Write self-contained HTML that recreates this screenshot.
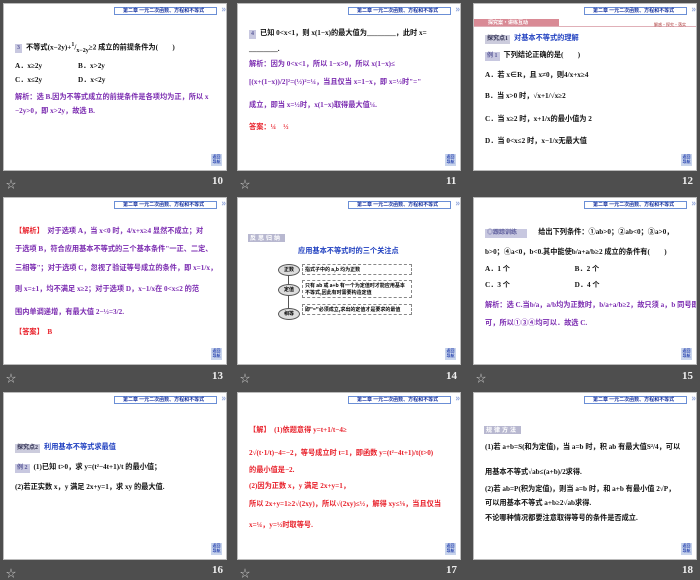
<!DOCTYPE html>
<html><head><meta charset="utf-8"><style>
*{margin:0;padding:0;box-sizing:border-box}
body{width:700px;height:577px;background:#4e4e4e;position:relative;overflow:hidden;font-family:"Liberation Serif","Noto Sans CJK SC",serif}
.s{position:absolute;width:224px;height:168px;background:#fff;border:1px solid #bbb;overflow:hidden}
.hd{position:absolute;left:110px;top:3px;width:103px;height:8px;border:1px solid #6b8fd6;background:#fff;font:bold 5px "Noto Sans CJK SC",sans-serif;color:#1a35a0;line-height:6px;padding-left:8px;white-space:nowrap}
.hd:after{content:"»";position:absolute;right:-10px;top:-2px;font-size:9px;color:#8aa0d8}
.nv{position:absolute;right:4px;bottom:4px;width:11px;height:12px;background:#c8d4ec;color:#2a45b0;font:bold 4px "Noto Sans CJK SC",sans-serif;line-height:5px;text-align:center;padding-top:1px}
.l{position:absolute;left:11px;white-space:nowrap;font-size:7.2px;font-weight:bold;color:#111;line-height:9px}
.p{color:#7a2ab0}.r{color:#e8202a}.b{color:#2040c0}
.lab{position:absolute;color:#eee;font:bold 11px "Liberation Serif",serif}
.st{position:absolute;color:#ccc;font-size:10px}
.tag{display:inline-block;background:#c8c8e0;color:#5a5a9a;font-size:6px;padding:0 2px;margin-right:4px}
.ov{position:absolute;width:22px;height:12px;border:1px solid #555;border-radius:50%;background:#ddd;font:bold 5px "Noto Sans CJK SC",sans-serif;text-align:center;line-height:10px}
.bx{position:absolute;left:64px;border:1px dashed #888;font:bold 5px "Noto Sans CJK SC",sans-serif;line-height:7px;padding:1px 2px;width:110px}
</style></head><body>

<!-- 10 -->
<div class="s" style="left:3px;top:3px">
<div class="hd">第二章 一元二次函数、方程和不等式</div>
<div class="l" style="top:37px"><span class="tag">3</span>不等式(x−2y)+<sup>1</sup>/<sub>x−2y</sub>≥2 成立的前提条件为(　　)</div>
<div class="l" style="top:58px">A．x≥2y　　　　　B．x&gt;2y</div>
<div class="l" style="top:72px">C．x≤2y　　　　　D．x&lt;2y</div>
<div class="l p" style="top:89px">解析：选 B.因为不等式成立的前提条件是各项均为正，所以 x</div>
<div class="l p" style="top:103px">−2y&gt;0，即 x&gt;2y，故选 B.</div>
<div class="nv">返回<br>导航</div></div>
<div class="st" style="left:6px;top:176px">☆</div><div class="lab" style="left:212px;top:175px">10</div>

<!-- 11 -->
<div class="s" style="left:237px;top:3px">
<div class="hd">第二章 一元二次函数、方程和不等式</div>
<div class="l" style="top:25px"><span class="tag">4</span>已知 0&lt;x&lt;1，则 x(1−x)的最大值为________，此时 x=</div>
<div class="l" style="top:41px">________.</div>
<div class="l p" style="top:56px">解析：因为 0&lt;x&lt;1，所以 1−x&gt;0，所以 x(1−x)≤</div>
<div class="l p" style="top:74px">[(x+(1−x))/2]²=(½)²=¼，当且仅当 x=1−x，即 x=½时"="</div>
<div class="l p" style="top:97px">成立，即当 x=½时，x(1−x)取得最大值¼.</div>
<div class="l r" style="top:119px">答案：¼　½</div>
<div class="nv">返回<br>导航</div></div>
<div class="st" style="left:240px;top:176px">☆</div><div class="lab" style="left:446px;top:175px">11</div>

<!-- 12 -->
<div class="s" style="left:473px;top:3px">
<div class="hd">第二章 一元二次函数、方程和不等式</div>
<div style="position:absolute;left:0;top:15px;width:85px;height:8px;background:#d98a95;color:#fff;font:bold 5px 'Noto Sans CJK SC',sans-serif;padding-left:14px;line-height:8px">探究案·讲练互动</div>
<div style="position:absolute;left:0;top:22px;width:224px;height:1px;background:#e0b0b8"></div>
<div style="position:absolute;left:180px;top:18px;font:4px 'Noto Sans CJK SC',sans-serif;color:#a33">解惑·探究·落实</div>
<div class="l" style="top:30px"><span class="tag" style="background:#ccd;color:#335">探究点1</span><span class="b">对基本不等式的理解</span></div>
<div class="l" style="top:47px"><span class="tag">例 1</span>下列结论正确的是(　　)</div>
<div class="l" style="top:67px">A．若 x∈R，且 x≠0，则4/x+x≥4</div>
<div class="l" style="top:88px">B．当 x&gt;0 时，√x+1/√x≥2</div>
<div class="l" style="top:111px">C．当 x≥2 时，x+1/x的最小值为 2</div>
<div class="l" style="top:133px">D．当 0&lt;x≤2 时，x−1/x无最大值</div>
<div class="nv">返回<br>导航</div></div>
<div class="lab" style="left:682px;top:175px">12</div>

<!-- 13 -->
<div class="s" style="left:3px;top:197px">
<div class="hd">第二章 一元二次函数、方程和不等式</div>
<div class="l p" style="top:29px"><span class="r">【解析】</span>　对于选项 A，当 x&lt;0 时，4/x+x≥4 显然不成立；对</div>
<div class="l p" style="top:47px">于选项 B，符合应用基本不等式的三个基本条件"一正、二定、</div>
<div class="l p" style="top:66px">三相等"；对于选项 C，忽视了验证等号成立的条件，即 x=1/x，</div>
<div class="l p" style="top:87px">则 x=±1，均不满足 x≥2；对于选项 D，x−1/x在 0&lt;x≤2 的范</div>
<div class="l p" style="top:110px">围内单调递增，有最大值 2−½=3/2.</div>
<div class="l r" style="top:130px">【答案】　B</div>
<div class="nv">返回<br>导航</div></div>
<div class="st" style="left:6px;top:370px">☆</div><div class="lab" style="left:212px;top:370px">13</div>

<!-- 14 -->
<div class="s" style="left:237px;top:197px">
<div class="hd">第二章 一元二次函数、方程和不等式</div>
<div style="position:absolute;left:10px;top:36px;width:37px;height:8px;background:#b8b8d0;color:#fff;font:bold 6px 'Noto Sans CJK SC',sans-serif;line-height:8px;letter-spacing:2px;padding-left:2px">反思归纳</div>
<div class="l b" style="top:49px;left:60px">应用基本不等式时的三个关注点</div>
<div style="position:absolute;left:50px;top:72px;width:1px;height:45px;background:#555"></div>
<div class="ov" style="left:40px;top:66px">正数</div>
<div class="ov" style="left:40px;top:86px">定值</div>
<div class="ov" style="left:40px;top:110px">相等</div>
<div class="bx" style="top:66px">指式子中的 a,b 均为正数</div>
<div class="bx" style="top:82px">只有 ab 或 a+b 有一个为定值时才能应用基本不等式,因此有时需要构造定值</div>
<div class="bx" style="top:106px">即"="必须成立,求出的定值才是要求的最值</div>
<div class="nv">返回<br>导航</div></div>
<div class="st" style="left:240px;top:370px">☆</div><div class="lab" style="left:446px;top:370px">14</div>

<!-- 15 -->
<div class="s" style="left:473px;top:197px">
<div class="hd">第二章 一元二次函数、方程和不等式</div>
<div class="l" style="top:30px"><span class="tag" style="width:42px">◎跟踪训练</span>　给出下列条件：①ab&gt;0；②ab&lt;0；③a&gt;0，</div>
<div class="l" style="top:50px">b&gt;0；④a&lt;0，b&lt;0.其中能使b/a+a/b≥2 成立的条件有(　　)</div>
<div class="l" style="top:67px">A．1 个　　　　　　　　　B．2 个</div>
<div class="l" style="top:83px">C．3 个　　　　　　　　　D．4 个</div>
<div class="l p" style="top:103px">解析：选 C.当b/a，a/b均为正数时，b/a+a/b≥2，故只须 a，b 同号即</div>
<div class="l p" style="top:121px">可，所以①③④均可以．故选 C.</div>
<div class="nv">返回<br>导航</div></div>
<div class="st" style="left:476px;top:370px">☆</div><div class="lab" style="left:682px;top:370px">15</div>

<!-- 16 -->
<div class="s" style="left:3px;top:392px">
<div class="hd">第二章 一元二次函数、方程和不等式</div>
<div class="l" style="top:50px"><span class="tag" style="background:#ccd;color:#335">探究点2</span><span class="b">利用基本不等式求最值</span></div>
<div class="l" style="top:70px"><span class="tag">例 2</span>(1)已知 t&gt;0，求 y=(t²−4t+1)/t 的最小值；</div>
<div class="l" style="top:90px">(2)若正实数 x，y 满足 2x+y=1，求 xy 的最大值.</div>
<div class="nv">返回<br>导航</div></div>
<div class="st" style="left:6px;top:565px">☆</div><div class="lab" style="left:212px;top:564px">16</div>

<!-- 17 -->
<div class="s" style="left:237px;top:392px">
<div class="hd">第二章 一元二次函数、方程和不等式</div>
<div class="l r" style="top:33px">【解】　(1)依题意得 y=t+1/t−4≥</div>
<div class="l r" style="top:56px">2√(t·1/t)−4=−2，等号成立时 t=1，即函数 y=(t²−4t+1)/t(t&gt;0)</div>
<div class="l r" style="top:73px">的最小值是−2.</div>
<div class="l r" style="top:89px">(2)因为正数 x，y 满足 2x+y=1，</div>
<div class="l r" style="top:107px">所以 2x+y=1≥2√(2xy)，所以√(2xy)≤½，解得 xy≤⅛，当且仅当</div>
<div class="l r" style="top:128px">x=¼，y=½时取等号.</div>
<div class="nv">返回<br>导航</div></div>
<div class="st" style="left:240px;top:565px">☆</div><div class="lab" style="left:446px;top:564px">17</div>

<!-- 18 -->
<div class="s" style="left:473px;top:392px">
<div class="hd">第二章 一元二次函数、方程和不等式</div>
<div style="position:absolute;left:10px;top:33px;width:37px;height:8px;background:#b8b8d0;color:#fff;font:bold 6px 'Noto Sans CJK SC',sans-serif;line-height:8px;letter-spacing:2px;padding-left:2px">规律方法</div>
<div class="l" style="top:50px">(1)若 a+b=S(和为定值)，当 a=b 时，积 ab 有最大值S²/4，可以</div>
<div class="l" style="top:75px">用基本不等式√ab≤(a+b)/2求得.</div>
<div class="l" style="top:92px">(2)若 ab=P(积为定值)，则当 a=b 时，和 a+b 有最小值 2√P，</div>
<div class="l" style="top:106px">可以用基本不等式 a+b≥2√ab求得.</div>
<div class="l" style="top:121px">不论哪种情况都要注意取得等号的条件是否成立.</div>
<div class="nv">返回<br>导航</div></div>
<div class="lab" style="left:682px;top:564px">18</div>
</body></html>
